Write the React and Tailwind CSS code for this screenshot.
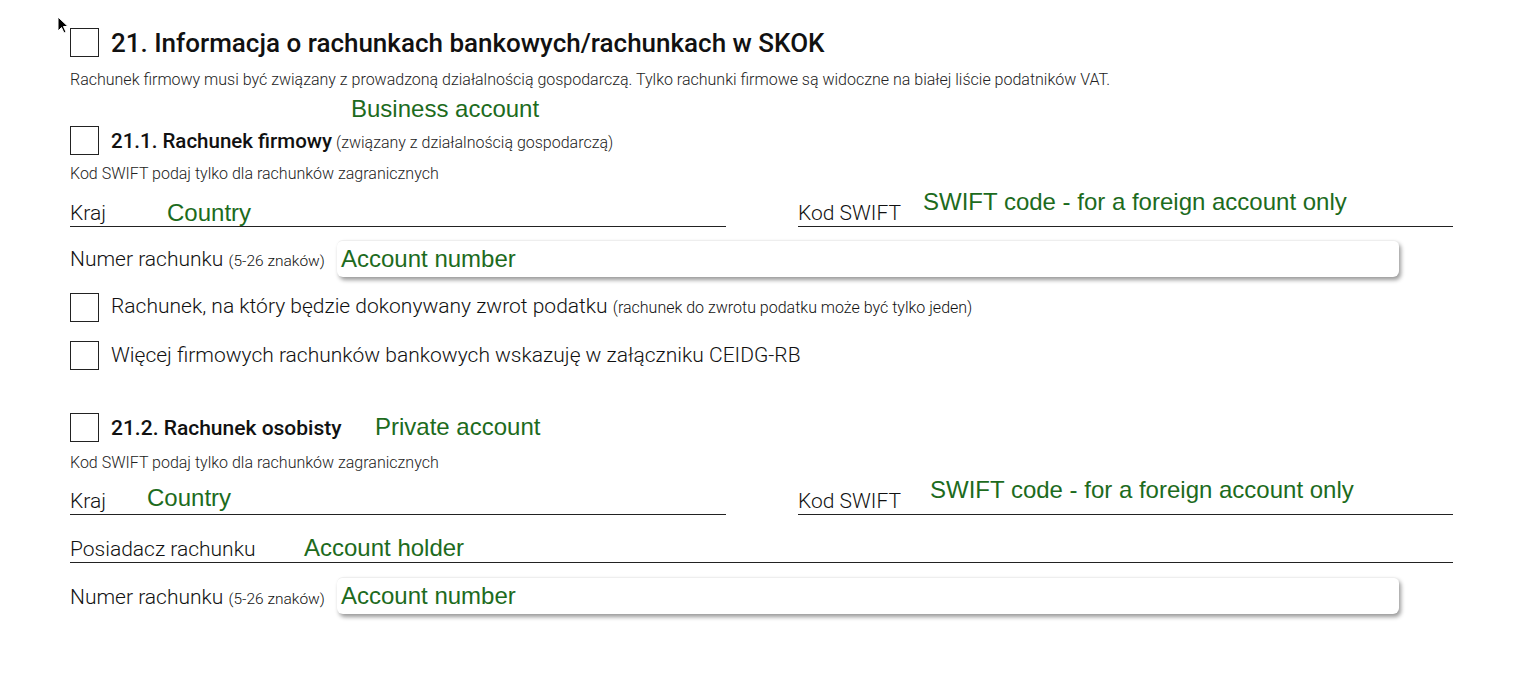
import React from "react";

const GREEN = "text-[#1d6b1d]";
const NOTE = `font-['Liberation_Sans',Arial,sans-serif] font-normal text-[24px] leading-[28px] ${GREEN}`;

function Box({ className = "" }) {
  return <div className={`w-[29px] h-[29px] border border-[#222] bg-white shrink-0 ${className}`} />;
}

function Cursor() {
  return (
    <svg className="absolute left-[57px] top-[16px]" width="12" height="19" viewBox="0 0 12 19" aria-hidden="true">
      <path d="M1 1 L1 15 L4.5 11.5 L7 17 L9 16 L6.5 10.5 L11 10.5 Z" fill="black" stroke="white" strokeWidth="1" />
    </svg>
  );
}

function LineField({ label, note, noteLeft, noteTop, width = "w-[656px]" }) {
  return (
    <div className={`relative ${width} h-[26px] border-b border-[#222]`}>
      <span className="text-[21px] leading-[24px] font-light text-[#111]">{label}</span>
      <span className={`absolute ${noteLeft} ${noteTop} whitespace-nowrap ${NOTE}`}>{note}</span>
    </div>
  );
}

function AccountNumber({ className = "" }) {
  return (
    <div className={`flex items-center ${className}`}>
      <span className="text-[21px] leading-[24px] font-light text-[#111] w-[267px] whitespace-nowrap mt-[4px]">
        Numer rachunku <span className="text-[15.5px]">(5-26 znaków)</span>
      </span>
      <div className="w-[1062px] h-[37px] bg-white rounded-[6px] border-t border-[#eee] shadow-[2px_3px_4px_rgba(0,0,0,0.4)] pl-[4px] flex items-center">
        <span className={NOTE}>Account number</span>
      </div>
    </div>
  );
}

export default function App() {
  return (
    <div className="relative min-h-[700px] bg-white font-['Roboto',sans-serif] text-[#111] pl-[70px] pt-[27px]">
      <Cursor />

      <div className="flex items-center gap-[12px]">
        <Box />
        <h1 className="text-[26px] leading-[29px] font-medium text-[#111] mt-[2px]">
          21. Informacja o rachunkach bankowych/rachunkach w SKOK
        </h1>
      </div>
      <p className="mt-[13px] text-[16px] leading-[18px] font-light text-[#222]">
        Rachunek firmowy musi być związany z prowadzoną działalnością gospodarczą. Tylko rachunki firmowe są widoczne na białej liście podatników VAT.
      </p>
      <div className={`mt-[6px] ml-[281px] ${NOTE}`}>Business account</div>

      <div className="mt-[1px] flex items-center gap-[12px]">
        <Box />
        <div className="mt-[2px] text-[#111]">
          <span className="text-[20.5px] font-medium">21.1. Rachunek firmowy</span>{" "}
          <span className="text-[16px] font-light text-[#222]">(związany z działalnością gospodarczą)</span>
        </div>
      </div>
      <p className="mt-[8px] text-[16px] leading-[18px] font-light text-[#222]">Kod SWIFT podaj tylko dla rachunków zagranicznych</p>

      <div className="mt-[18px] flex gap-[72px]">
        <LineField label="Kraj" note="Country" noteLeft="left-[97px]" noteTop="top-[-2px]" />
        <LineField label="Kod SWIFT" note="SWIFT code - for a foreign account only" noteLeft="left-[125px]" noteTop="top-[-13px]" width="w-[655px]" />
      </div>

      <AccountNumber className="mt-[13px]" />

      <div className="mt-[16px] flex items-center gap-[12px]">
        <Box />
        <span className="text-[21px] leading-[24px] font-light">
          Rachunek, na który będzie dokonywany zwrot podatku{" "}
          <span className="text-[16px]">(rachunek do zwrotu podatku może być tylko jeden)</span>
        </span>
      </div>
      <div className="mt-[19px] flex items-center gap-[12px]">
        <Box />
        <span className="text-[21px] leading-[24px] font-light">Więcej firmowych rachunków bankowych wskazuję w załączniku CEIDG-RB</span>
      </div>

      <div className="mt-[40px] flex items-center gap-[12px]">
        <Box />
        <span className="text-[21px] font-medium text-[#111] mt-[3px] w-[252px]">21.2. Rachunek osobisty</span>
        <span className={NOTE}>Private account</span>
      </div>
      <p className="mt-[10px] text-[16px] leading-[18px] font-light text-[#222]">Kod SWIFT podaj tylko dla rachunków zagranicznych</p>

      <div className="mt-[17px] flex gap-[72px]">
        <LineField label="Kraj" note="Country" noteLeft="left-[77px]" noteTop="top-[-5px]" />
        <LineField label="Kod SWIFT" note="SWIFT code - for a foreign account only" noteLeft="left-[132px]" noteTop="top-[-13px]" width="w-[655px]" />
      </div>

      <div className="mt-[22px]">
        <LineField label="Posiadacz rachunku" note="Account holder" noteLeft="left-[234px]" noteTop="top-[-3px]" width="w-[1383px]" />
      </div>

      <AccountNumber className="mt-[14px]" />
    </div>
  );
}
